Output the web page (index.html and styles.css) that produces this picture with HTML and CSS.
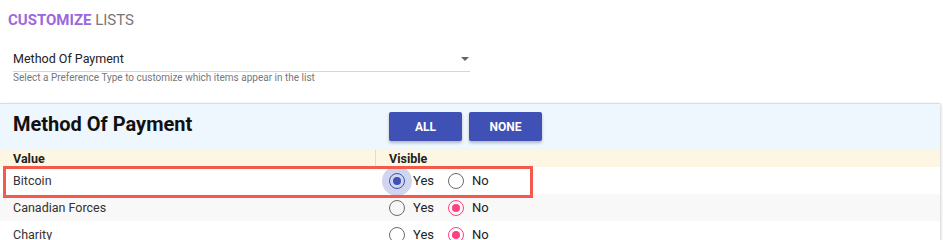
FILE: index.html
```html
<!DOCTYPE html>
<html>
<head>
<meta charset="utf-8">
<link rel="stylesheet" href="styles.css">
</head>
<body>
<div class="page">
  <h1 class="title"><span class="accent">CUSTOMIZE</span> LISTS</h1>
  <div class="select-field">
    <div class="select-box">
      <span class="select-value">Method Of Payment</span>
      <span class="select-arrow"></span>
    </div>
    <div class="select-help">Select a Preference Type to customize which items appear in the list</div>
  </div>
  <div class="card">
    <div class="card-head">
      <div class="card-title">Method Of Payment</div>
      <div class="card-actions">
        <button class="btn">ALL</button>
        <button class="btn">NONE</button>
      </div>
    </div>
    <div class="table">
      <div class="row head-row">
        <div class="cell c-value">Value</div>
        <div class="cell c-visible">Visible</div>
      </div>
      <div class="row-wrap">
        <div class="row">
          <div class="cell c-value">Bitcoin</div>
          <div class="cell c-visible">
            <span class="radio on blue focus"></span><span class="lbl">Yes</span>
            <span class="radio"></span><span class="lbl">No</span>
          </div>
        </div>
        <div class="highlight"></div>
      </div>
      <div class="row alt">
        <div class="cell c-value">Canadian Forces</div>
        <div class="cell c-visible">
          <span class="radio"></span><span class="lbl">Yes</span>
          <span class="radio on pink"></span><span class="lbl">No</span>
        </div>
      </div>
      <div class="row">
        <div class="cell c-value">Charity</div>
        <div class="cell c-visible">
          <span class="radio"></span><span class="lbl">Yes</span>
          <span class="radio on pink"></span><span class="lbl">No</span>
        </div>
      </div>
    </div>
  </div>
</div>
</body>
</html>
```
FILE: styles.css
```css
* { box-sizing: border-box; }
html, body { margin: 0; padding: 0; background: #fff; }
body { font-family: Roboto, "Liberation Sans", Arial, sans-serif; color: #222; overflow: hidden; }
.page { width: 943px; padding-top: 11px; }
.title { margin: 0 0 0 8px; font-size: 15px; font-weight: 400; color: #777; line-height: 18px; letter-spacing: 0; }
.title .accent { color: #9a68dc; font-weight: 700; }
.select-field { margin: 21px 0 0 13px; width: 457px; }
.select-box { display: flex; align-items: center; justify-content: space-between; height: 22px; border-bottom: 1px solid #d6d6d6; }
.select-value { font-size: 12.5px; color: #222; line-height: 16px; padding-bottom: 4px; }
.select-arrow { width: 0; height: 0; border-left: 4px solid transparent; border-right: 4px solid transparent; border-top: 4px solid #666; margin-right: 1px; margin-bottom: 4px; }
.select-help { font-size: 10px; color: #777; margin-top: 0; line-height: 12px; }
.card { margin-top: 19px; width: 940px; border-top: 1px solid #ddd; box-shadow: 1px 1px 3px rgba(0,0,0,0.18); background: #fff; }
.card-head { height: 46px; background: #eef6fe; display: flex; align-items: flex-start; }
.card-title { width: 376px; padding: 8px 0 0 13px; font-size: 20px; font-weight: 700; color: #111; line-height: 24px; }
.card-actions { display: flex; gap: 7px; padding: 8px 0 0 13px; }
.btn { width: 73px; height: 29px; border: none; border-radius: 2px; background: #3f51b5; color: #fff; font-family: Roboto, "Liberation Sans", sans-serif; font-weight: 700; font-size: 12px; box-shadow: 0 2px 3px rgba(0,0,0,0.25); padding: 0; }
.table { display: flex; flex-direction: column; }
.row { display: flex; height: 27px; align-items: center; background: #fff; }
.row.alt { background: #f8f8f8; }
.head-row { height: 17px; background: #fdf6e3; }
.head-row .cell { font-weight: 700; font-size: 12.5px; color: #222; }
.head-row .c-visible { border-left: 1px solid #e3dccb; height: 17px; display: flex; align-items: center; }
.cell { font-size: 12.5px; color: #333; }
.c-value { width: 375px; padding-left: 13px; }
.c-visible { padding-left: 13px; display: flex; align-items: center; }
.row-wrap { position: relative; }
.highlight { position: absolute; left: 3px; top: -1px; width: 530px; height: 32px; border: 3px solid #f45a4b; pointer-events: none; }
.radio { position: relative; width: 16px; height: 16px; border: 1.5px solid #6b6b6b; border-radius: 50%; margin-left: 1px; flex: none; }
.radio.on.blue { border-color: #3f51b5; }
.radio.on.pink { border-color: #ff4081; }
.radio.on::after { content: ""; position: absolute; left: 50%; top: 50%; width: 8px; height: 8px; margin: -4px 0 0 -4px; border-radius: 50%; }
.radio.blue::after { background: #3f51b5; }
.radio.pink::after { background: #ff4081; }
.radio.focus::before { content: ""; position: absolute; left: 50%; top: 50%; width: 30px; height: 30px; margin: -15px 0 0 -15px; border-radius: 50%; background: rgba(63,81,181,0.24); }
.lbl { margin: 0 13px 0 8px; font-size: 13px; color: #222; }
```
